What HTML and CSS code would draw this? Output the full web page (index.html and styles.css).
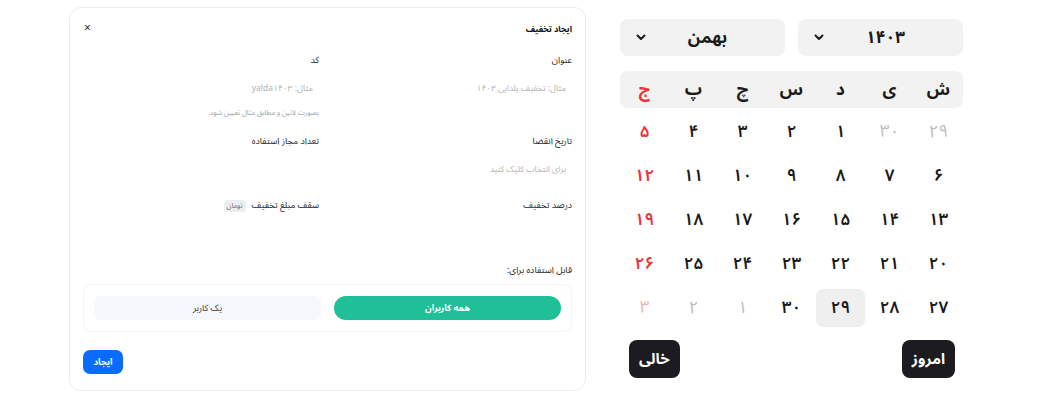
FILE: index.html
```html
<!DOCTYPE html>
<html lang="fa">
<head>
<meta charset="utf-8">
<title>ایجاد تخفیف</title>
<link rel="stylesheet" href="styles.css">
</head>
<body>
<div class="page">
  <section class="modal" dir="rtl">
    <header class="modal-head">
      <h2 class="modal-title">ایجاد تخفیف</h2>
      <button class="close" type="button">×</button>
    </header>
    <div class="form-grid">
      <div class="field">
        <div class="label">عنوان</div>
        <div class="input"><span class="ph">مثال: تخفیف یلدایی ۱۴۰۳</span></div>
      </div>
      <div class="field">
        <div class="label">کد</div>
        <div class="input"><span class="ph">مثال: yalda۱۴۰۳</span></div>
        <p class="hint">بصورت لاتین و مطابق مثال تعیین شود.</p>
      </div>
      <div class="field">
        <div class="label">تاریخ انقضا</div>
        <div class="input"><span class="ph">برای انتخاب کلیک کنید</span></div>
      </div>
      <div class="field">
        <div class="label">تعداد مجاز استفاده</div>
        <div class="input"></div>
      </div>
      <div class="field">
        <div class="label">درصد تخفیف</div>
        <div class="input"></div>
      </div>
      <div class="field">
        <div class="label label-badge">سقف مبلغ تخفیف <span class="badge">تومان</span></div>
        <div class="input"></div>
      </div>
    </div>
    <div class="label usage-label">قابل استفاده برای:</div>
    <div class="segment">
      <button class="seg-btn seg-active" type="button">همه کاربران</button>
      <button class="seg-btn seg-plain" type="button">یک کاربر</button>
    </div>
    <div class="modal-foot">
      <button class="create" type="button">ایجاد</button>
    </div>
  </section>

  <section class="calendar" dir="rtl">
    <div class="selects">
      <div class="select"><span class="sel-text">۱۴۰۳</span><svg class="chev" width="10" height="7" viewBox="0 0 10 7"><path d="M1.5 1.5 L5 5 L8.5 1.5" fill="none" stroke="#1a1a1a" stroke-width="2" stroke-linecap="round" stroke-linejoin="round"/></svg></div>
      <div class="select"><span class="sel-text">بهمن</span><svg class="chev" width="10" height="7" viewBox="0 0 10 7"><path d="M1.5 1.5 L5 5 L8.5 1.5" fill="none" stroke="#1a1a1a" stroke-width="2" stroke-linecap="round" stroke-linejoin="round"/></svg></div>
    </div>
    <div class="weekdays">
      <span>ش</span><span>ی</span><span>د</span><span>س</span><span>چ</span><span>پ</span><span class="red">ج</span>
    </div>
    <div class="days">
      <span class="muted">۲۹</span><span class="muted">۳۰</span><span>۱</span><span>۲</span><span>۳</span><span>۴</span><span class="red">۵</span>
      <span>۶</span><span>۷</span><span>۸</span><span>۹</span><span>۱۰</span><span>۱۱</span><span class="red">۱۲</span>
      <span>۱۳</span><span>۱۴</span><span>۱۵</span><span>۱۶</span><span>۱۷</span><span>۱۸</span><span class="red">۱۹</span>
      <span>۲۰</span><span>۲۱</span><span>۲۲</span><span>۲۳</span><span>۲۴</span><span>۲۵</span><span class="red">۲۶</span>
      <span>۲۷</span><span>۲۸</span><span class="selected">۲۹</span><span>۳۰</span><span class="muted">۱</span><span class="muted">۲</span><span class="muted-red">۳</span>
    </div>
    <div class="cal-foot">
      <button class="dark-btn" type="button">امروز</button>
      <button class="dark-btn" type="button">خالی</button>
    </div>
  </section>
</div>
</body>
</html>
```

FILE: styles.css
```css
* { box-sizing: border-box; }
html, body { margin: 0; padding: 0; background: #ffffff; }
body {
  font-family: "Noto Sans Arabic", "DejaVu Sans", "Noto Sans", sans-serif;
  color: #1f1f1f;
}
button { font-family: inherit; border: 0; cursor: pointer; }

.page {
  display: flex;
  align-items: flex-start;
  gap: 34px;
  padding: 7px 0 0 69px;
}

/* ---------- modal ---------- */
.modal {
  width: 517px;
  height: 384px;
  border: 1px solid #ececec;
  border-radius: 12px;
  padding: 13px 13px 14px;
  display: flex;
  flex-direction: column;
  background: #fff;
}
.modal-head {
  display: flex;
  justify-content: space-between;
  align-items: center;
  height: 16px;
  margin-bottom: 17px;
}
.modal-title {
  margin: 0;
  font-size: 8.5px;
  font-weight: 700;
  color: #111;
}
.close {
  background: none;
  padding: 0;
  font-size: 12px;
  line-height: 16px;
  color: #333;
  margin-left: 1px;
}
.form-grid {
  display: grid;
  grid-template-columns: 1fr 1fr;
  column-gap: 17px;
  row-gap: 16px;
}
.field { display: flex; flex-direction: column; }
.label {
  font-size: 9px;
  line-height: 14px;
  color: #222;
}
.label-badge { display: flex; align-items: center; gap: 6px; }
.badge {
  font-size: 7px;
  line-height: 12px;
  padding: 0 3px;
  background: #eceef1;
  color: #666;
  border-radius: 3px;
}
.input {
  height: 28px;
  margin-top: 6px;
  display: flex;
  align-items: center;
  padding: 0 6px;
}
.ph {
  font-size: 8.5px;
  color: #b3b3b3;
}
.hint {
  margin: 5px 0 0;
  font-size: 7px;
  line-height: 12px;
  color: #9d9d9d;
}
.usage-label { margin-top: 17px; }
.segment {
  margin-top: 6px;
  border: 1px solid #f4f4f6;
  border-radius: 8px;
  padding: 11px 10px;
  display: grid;
  grid-template-columns: 1fr 1fr;
  gap: 13px;
}
.seg-btn {
  height: 24px;
  color: #333;
  font-size: 9px;
}
.seg-plain {
  background: #f5f8fc;
  border-radius: 6px;
}
.seg-active {
  background: #1fbf98;
  border-radius: 12px;
  color: #fff;
  font-weight: 700;
}
.modal-foot {
  margin-top: 18px;
  display: flex;
  justify-content: flex-end;
}
.create {
  width: 40px;
  height: 24px;
  border-radius: 7px;
  background: #0a6cff;
  color: #fff;
  font-size: 9px;
  font-weight: 700;
}

/* ---------- calendar ---------- */
.calendar {
  width: 343px;
  margin-top: 12px;
}
.selects {
  display: grid;
  grid-template-columns: 1fr 1fr;
  gap: 13px;
}
.select {
  height: 37px;
  background: #f2f2f2;
  border-radius: 8px;
  display: flex;
  align-items: center;
  padding: 0 16px 0 16px;
}
.sel-text {
  flex: 1;
  text-align: center;
  font-size: 17px;
  font-weight: 700;
  color: #1a1a1a;
}
.chev { flex: none; }
.weekdays {
  margin-top: 15px;
  height: 37px;
  background: #f2f2f2;
  border-radius: 8px;
  display: grid;
  grid-template-columns: repeat(7, 1fr);
  align-items: center;
  justify-items: center;
  font-size: 17px;
  font-weight: 700;
  color: #1a1a1a;
}
.days {
  margin-top: 5px;
  display: grid;
  grid-template-columns: repeat(7, 1fr);
  grid-auto-rows: 38px;
  row-gap: 6px;
  font-size: 17px;
  font-weight: 600;
  color: #1a1a1a;
}
.days span {
  display: flex;
  align-items: center;
  justify-content: center;
  border-radius: 7px;
}
.red { color: #e8343a; }
.muted { color: #bdbdbd; font-weight: 400; }
.muted-red { color: #f4b1b4; font-weight: 400; }
.days .selected { background: #efefef; }
.cal-foot {
  margin-top: 13px;
  display: flex;
  justify-content: space-between;
  padding: 0 8px 0 9px;
}
.dark-btn {
  height: 38px;
  padding: 0 10px;
  border-radius: 8px;
  background: #1b1b20;
  color: #fff;
  font-size: 15px;
  font-weight: 700;
}
```
